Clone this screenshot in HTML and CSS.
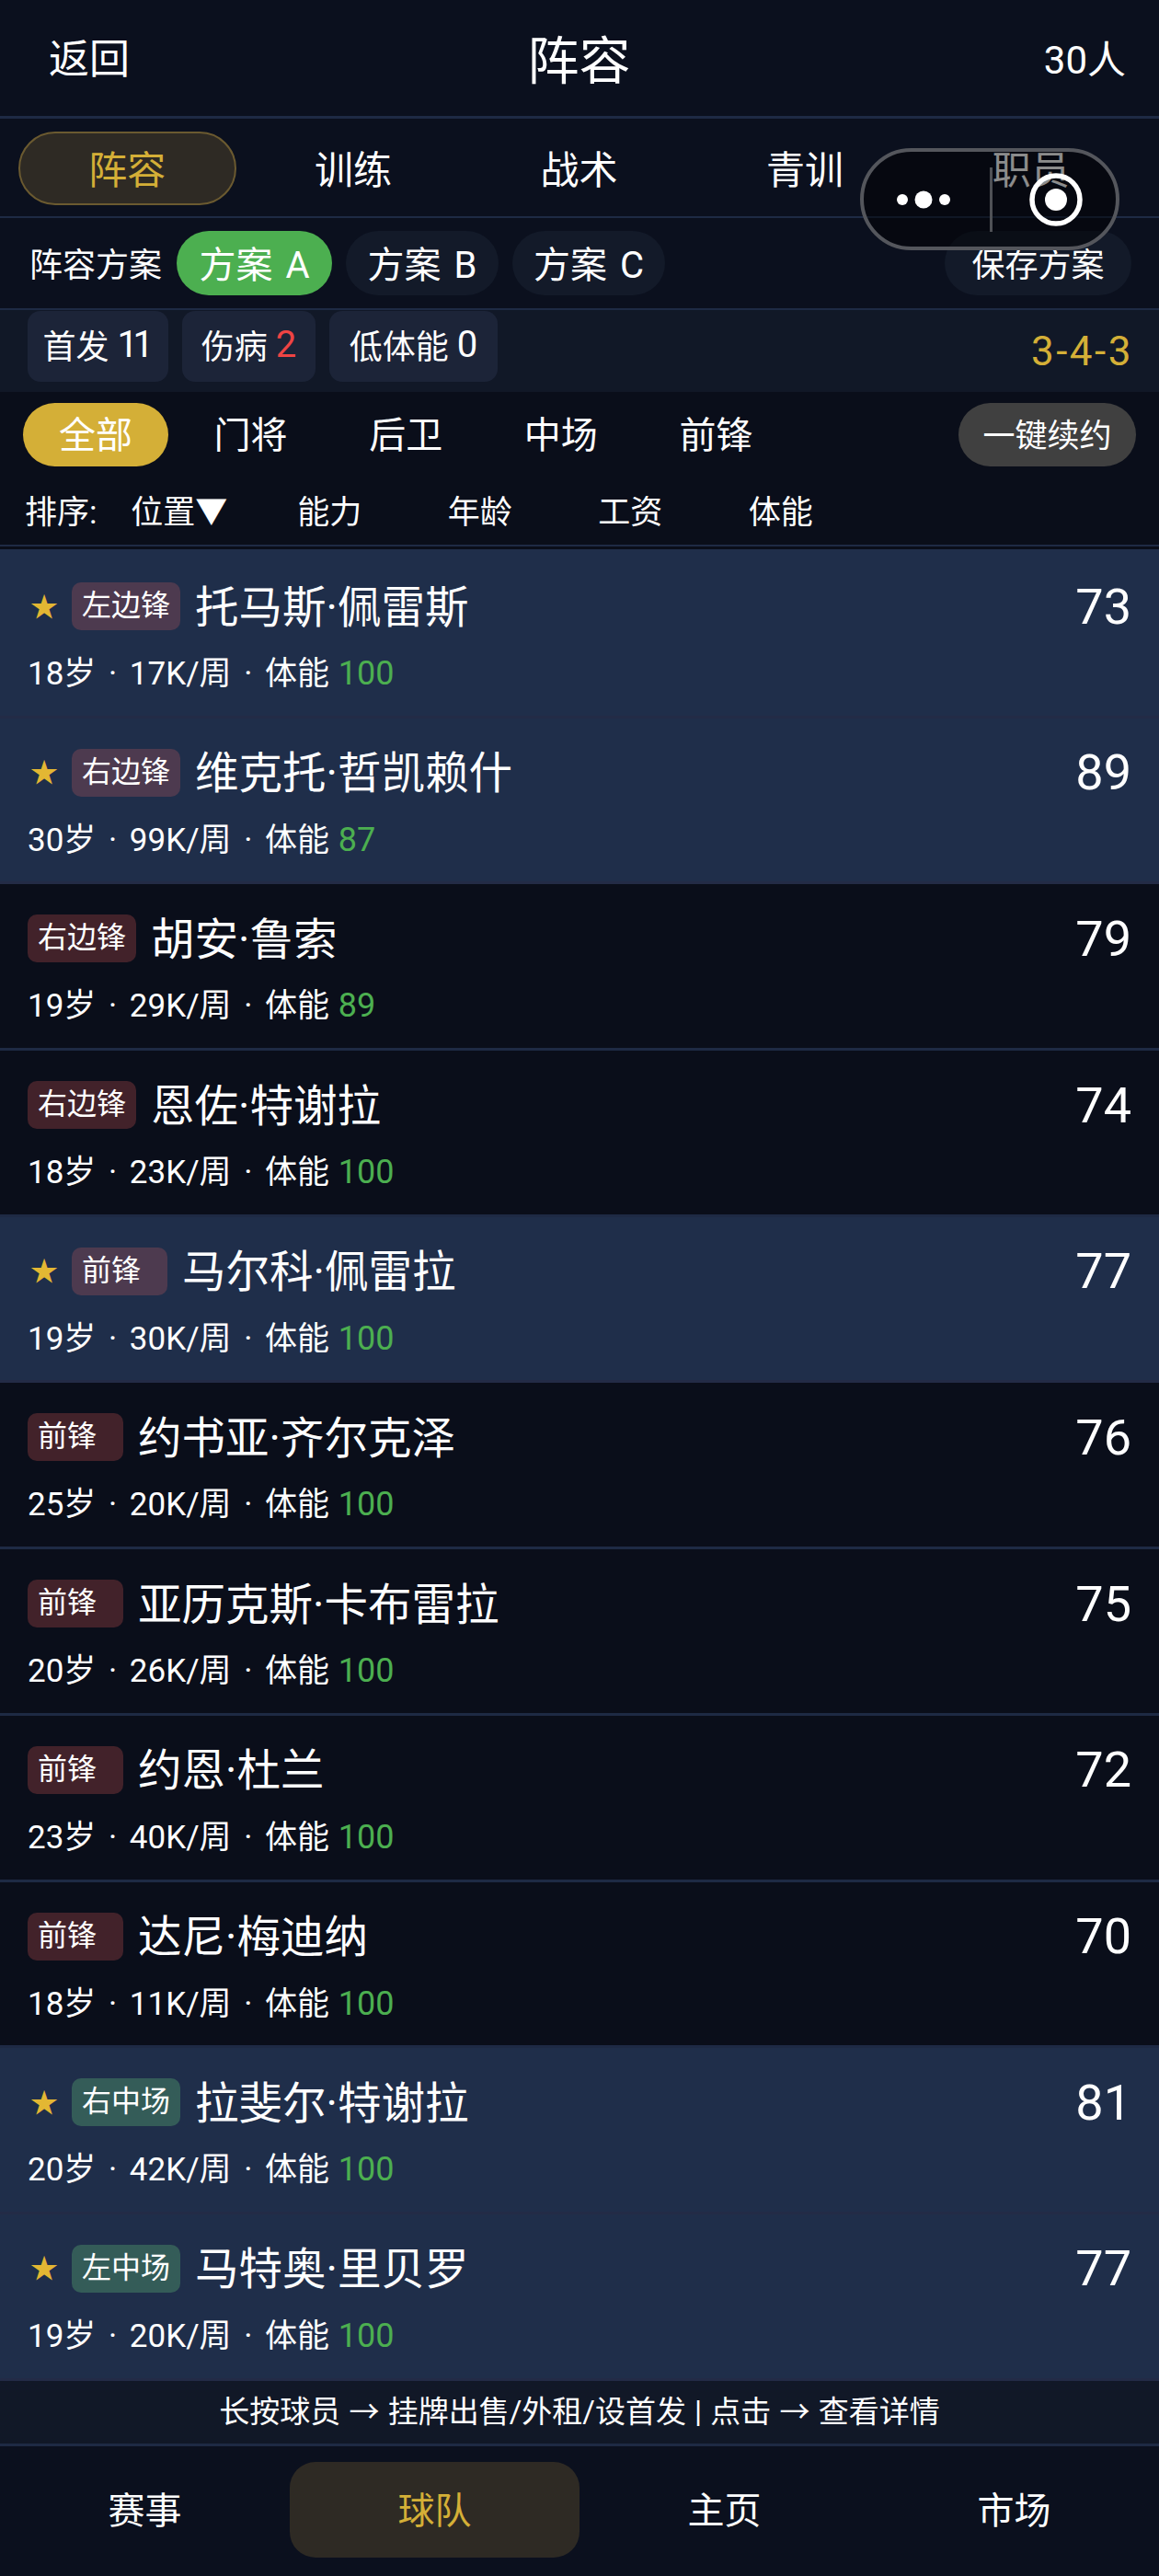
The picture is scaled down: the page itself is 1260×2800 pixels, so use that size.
FILE: index.html
```html
<!DOCTYPE html>
<html lang="zh-CN">

<head>
    <meta charset="UTF-8">
    <meta name="viewport" content="width=device-width, initial-scale=1.0">
    <title>阵容</title>
    <link rel="stylesheet" href="styles.css">
</head>

<body>
    <div class="page">
        <header class="top-bar">
            <span class="back">返回</span>
            <span class="title">阵容</span>
            <span class="count">30人</span>
        </header>

        <nav class="tabs">
            <div class="tab active">阵容</div>
            <div class="tab">训练</div>
            <div class="tab">战术</div>
            <div class="tab">青训</div>
            <div class="tab">职员</div>
        </nav>

        <div class="plans">
            <span class="plans-label">阵容方案</span>
            <span class="plan active">方案 A</span>
            <span class="plan">方案 B</span>
            <span class="plan">方案 C</span>
            <span class="plan save">保存方案</span>
        </div>

        <div class="stats">
            <span class="stat first">首发 <em class="num ones">11</em></span>
            <span class="stat second">伤病 <em class="num red">2</em></span>
            <span class="stat third">低体能 <em class="num">0</em></span>
            <span class="formation">3-4-3</span>
        </div>

        <div class="filters">
            <span class="filter active">全部</span>
            <span class="filter">门将</span>
            <span class="filter">后卫</span>
            <span class="filter">中场</span>
            <span class="filter">前锋</span>
            <span class="renew">一键续约</span>
        </div>

        <div class="sort">
            <span class="sort-label">排序:</span>
            <span class="sort-item">位置▼</span>
            <span class="sort-item">能力</span>
            <span class="sort-item">年龄</span>
            <span class="sort-item">工资</span>
            <span class="sort-item">体能</span>
        </div>

        <div class="list">
            <div class="row starter">
                <div class="row-top">
                    <span class="star">★</span>
                    <span class="badge fw">左边锋</span>
                    <span class="name">托马斯·佩雷斯</span>
                    <span class="rating">73</span>
                </div>
                <div class="meta">18岁 · 17K/周 · 体能 <span class="green">100</span></div>
            </div>
            <div class="row starter">
                <div class="row-top">
                    <span class="star">★</span>
                    <span class="badge fw">右边锋</span>
                    <span class="name">维克托·哲凯赖什</span>
                    <span class="rating">89</span>
                </div>
                <div class="meta">30岁 · 99K/周 · 体能 <span class="green">87</span></div>
            </div>
            <div class="row">
                <div class="row-top">
                    <span class="badge fw">右边锋</span>
                    <span class="name">胡安·鲁索</span>
                    <span class="rating">79</span>
                </div>
                <div class="meta">19岁 · 29K/周 · 体能 <span class="green">89</span></div>
            </div>
            <div class="row">
                <div class="row-top">
                    <span class="badge fw">右边锋</span>
                    <span class="name">恩佐·特谢拉</span>
                    <span class="rating">74</span>
                </div>
                <div class="meta">18岁 · 23K/周 · 体能 <span class="green">100</span></div>
            </div>
            <div class="row starter">
                <div class="row-top">
                    <span class="star">★</span>
                    <span class="badge fw">前锋</span>
                    <span class="name">马尔科·佩雷拉</span>
                    <span class="rating">77</span>
                </div>
                <div class="meta">19岁 · 30K/周 · 体能 <span class="green">100</span></div>
            </div>
            <div class="row">
                <div class="row-top">
                    <span class="badge fw">前锋</span>
                    <span class="name">约书亚·齐尔克泽</span>
                    <span class="rating">76</span>
                </div>
                <div class="meta">25岁 · 20K/周 · 体能 <span class="green">100</span></div>
            </div>
            <div class="row">
                <div class="row-top">
                    <span class="badge fw">前锋</span>
                    <span class="name">亚历克斯·卡布雷拉</span>
                    <span class="rating">75</span>
                </div>
                <div class="meta">20岁 · 26K/周 · 体能 <span class="green">100</span></div>
            </div>
            <div class="row">
                <div class="row-top">
                    <span class="badge fw">前锋</span>
                    <span class="name">约恩·杜兰</span>
                    <span class="rating">72</span>
                </div>
                <div class="meta">23岁 · 40K/周 · 体能 <span class="green">100</span></div>
            </div>
            <div class="row">
                <div class="row-top">
                    <span class="badge fw">前锋</span>
                    <span class="name">达尼·梅迪纳</span>
                    <span class="rating">70</span>
                </div>
                <div class="meta">18岁 · 11K/周 · 体能 <span class="green">100</span></div>
            </div>
            <div class="row starter">
                <div class="row-top">
                    <span class="star">★</span>
                    <span class="badge mf">右中场</span>
                    <span class="name">拉斐尔·特谢拉</span>
                    <span class="rating">81</span>
                </div>
                <div class="meta">20岁 · 42K/周 · 体能 <span class="green">100</span></div>
            </div>
            <div class="row starter">
                <div class="row-top">
                    <span class="star">★</span>
                    <span class="badge mf">左中场</span>
                    <span class="name">马特奥·里贝罗</span>
                    <span class="rating">77</span>
                </div>
                <div class="meta">19岁 · 20K/周 · 体能 <span class="green">100</span></div>
            </div>
        </div>

        <div class="hint">长按球员 → 挂牌出售/外租/设首发 | 点击 → 查看详情</div>

        <nav class="bottom-bar">
            <div class="bottom-item">赛事</div>
            <div class="bottom-item active">球队</div>
            <div class="bottom-item">主页</div>
            <div class="bottom-item">市场</div>
        </nav>

        <!-- 小程序胶囊按钮 -->
        <div class="capsule">
            <svg class="capsule-dots" width="62" height="24" viewBox="0 0 62 24">
                <circle cx="8" cy="12" r="6" fill="#fff" />
                <circle cx="31" cy="12" r="9.5" fill="#fff" />
                <circle cx="54" cy="12" r="6" fill="#fff" />
            </svg>
            <span class="capsule-line"></span>
            <svg class="capsule-ring" width="60" height="60" viewBox="0 0 60 60">
                <circle cx="30" cy="30" r="26" fill="none" stroke="#fff" stroke-width="5.5" />
                <circle cx="30" cy="30" r="12" fill="#fff" />
            </svg>
        </div>
    </div>
</body>

</html>
```

FILE: styles.css
```css
* {
    box-sizing: border-box;
}

body {
    margin: 0;
    background: #0a0e1a;
    color: #fff;
    font-family: Roboto, "Noto Sans CJK SC", sans-serif;
    font-weight: 400;
}

em {
    font-style: normal;
}

.page {
    position: relative;
    width: 1260px;
    height: 2800px;
    overflow: hidden;
}

/* 顶部标题 */
.top-bar {
    display: grid;
    grid-template-columns: 1fr auto 1fr;
    align-items: center;
    height: 129px;
    padding: 0 36px 4px 53px;
    background: #0b101e;
    border-bottom: 3px solid #1e2a44;
}

.back {
    font-size: 44px;
}

.title {
    font-size: 56px;
    margin-left: -18px;
}

.count {
    font-size: 42px;
    text-align: right;
}

.tabs {
    display: flex;
    height: 108px;
    padding: 14px 16px 12px;
    background: #0b101e;
    border-bottom: 2px solid #1e2a44;
}

.tab {
    flex: 1;
    display: flex;
    align-items: center;
    justify-content: center;
    margin: 0 5px 0 4px;
    padding-bottom: 3px;
    font-size: 42px;
    border: 2px solid transparent;
    border-radius: 40px;
}

.tab.active {
    color: #d4af37;
    background: #2e2a24;
    border-color: #6b5a30;
}

/* 方案 */
.plans {
    display: flex;
    align-items: center;
    gap: 15px;
    height: 100px;
    padding: 14px 30px 14px 32px;
    background: #0b101e;
    border-bottom: 2px solid #1e2a44;
}

.plans-label {
    margin-right: 1px;
    padding-bottom: 3px;
    font-size: 36px;
}

.plan {
    display: flex;
    align-items: center;
    justify-content: center;
    width: 166px;
    height: 70px;
    padding-bottom: 3px;
    font-size: 40px;
    word-spacing: 4px;
    background: #131a29;
    border-radius: 35px;
}

.plan.active {
    width: 169px;
    background: #4caf50;
}

.plan.save {
    width: 203px;
    margin-left: auto;
    font-size: 36px;
}

/* 统计 */
.stats {
    display: flex;
    align-items: flex-start;
    gap: 15px;
    height: 89px;
    padding: 1px 28px 0 30px;
    background: #111827;
}

.stat {
    display: flex;
    align-items: center;
    justify-content: center;
    gap: 9px;
    height: 77px;
    padding-bottom: 5px;
    font-size: 36px;
    background: #1c2438;
    border-radius: 14px;
}

.stat.first {
    width: 153px;
}

.stat.second {
    width: 145px;
}

.stat.third {
    width: 183px;
}

.num {
    font-size: 40px;
}

.num.ones {
    letter-spacing: -5.5px;
    padding-right: 5px;
}

.red {
    color: #ef4444;
}

.formation {
    margin-left: auto;
    align-self: center;
    font-size: 44px;
    letter-spacing: 2.5px;
    color: #d4af37;
}

/* 位置筛选 */
.filters {
    display: flex;
    align-items: center;
    gap: 10.6px;
    height: 89px;
    padding: 12px 25px 8px;
    background: #0a0e1a;
}

.filter {
    display: flex;
    align-items: center;
    justify-content: center;
    width: 158px;
    height: 69px;
    padding-bottom: 6px;
    font-size: 40px;
    border-radius: 35px;
}

.filter.active {
    background: #d4af37;
}

.renew {
    display: flex;
    align-items: center;
    justify-content: center;
    width: 193px;
    height: 69px;
    margin-left: auto;
    padding-bottom: 4px;
    font-size: 35px;
    background: #404040;
    border-radius: 35px;
}

/* 排序 */
.sort {
    display: flex;
    align-items: center;
    height: 79px;
    padding: 0 0 0 27px;
    font-size: 35px;
    border-bottom: 2px solid #1e2a44;
    background: #0a0e1a;
}

.sort-label {
    width: 86px;
}

.sort-item {
    width: 163.5px;
    text-align: center;
}

/* 球员列表 */
.list {
    margin-top: 3px;
    padding-top: 3px;
    background: #1f2e4a;
}

.row {
    height: 180.7px;
    padding: 33px 30px 0;
    background: #0a0e1a;
    border-bottom: 3px solid #1e2a44;
}

.row.starter {
    background: #1f2e4a;
    border-bottom-color: #232b46;
}

.row-top {
    display: flex;
    align-items: center;
    height: 52px;
}

.star {
    width: 48px;
    padding: 0 0 5px 3px;
    font-size: 30px;
    color: #e3b733;
}

.badge {
    min-width: 104px;
    height: 52px;
    padding: 0 11px;
    margin-right: 16px;
    font-size: 32px;
    line-height: 50px;
    border-radius: 10px;
    background: #42222a;
}

.starter .badge {
    background: #4d3a4f;
}

.starter .badge.mf {
    background: #345c58;
}

.name {
    padding-bottom: 6px;
    font-size: 47.5px;
}

.rating {
    margin-left: auto;
    font-size: 54px;
}

.meta {
    margin-top: 27px;
    font-size: 35px;
    line-height: 40px;
    word-spacing: 5px;
}

.green {
    margin-left: -4px;
    font-size: 36px;
    color: #4caf50;
}

/* 底部 */
.hint {
    height: 71px;
    padding-top: 12px;
    font-size: 33px;
    line-height: 44px;
    word-spacing: 1px;
    text-align: center;
    background: #111827;
    border-bottom: 3px solid #1e2a44;
}

.bottom-bar {
    display: flex;
    height: 141px;
    padding-top: 17px;
    background: #0b101e;
}

.bottom-item {
    display: flex;
    align-items: center;
    justify-content: center;
    width: 315px;
    height: 104px;
    padding-bottom: 3px;
    font-size: 40px;
    border-radius: 28px;
}

.bottom-item.active {
    color: #d4af37;
    background: #2e2a24;
}

/* 胶囊 */
.capsule {
    position: absolute;
    top: 161px;
    left: 935px;
    display: flex;
    align-items: center;
    width: 282px;
    height: 111px;
    background: rgba(0, 0, 0, 0.45);
    border: 4px solid #54565c;
    border-radius: 56px;
}

.capsule-dots {
    position: absolute;
    left: 34px;
    top: 40px;
}

.capsule-line {
    position: absolute;
    left: 137px;
    top: 17px;
    width: 3px;
    height: 70px;
    background: #4f5156;
}

.capsule-ring {
    position: absolute;
    left: 179px;
    top: 22px;
}
```
